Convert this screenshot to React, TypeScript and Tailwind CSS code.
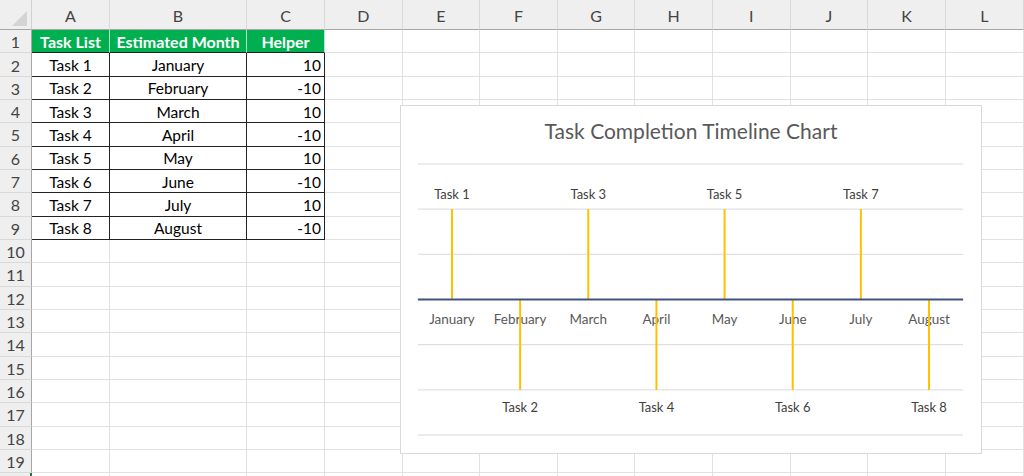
const COLS = ["A", "B", "C", "D", "E", "F", "G", "H", "I", "J", "K", "L"];

const TASKS = [
  { task: "Task 1", month: "January", helper: 10 },
  { task: "Task 2", month: "February", helper: -10 },
  { task: "Task 3", month: "March", helper: 10 },
  { task: "Task 4", month: "April", helper: -10 },
  { task: "Task 5", month: "May", helper: 10 },
  { task: "Task 6", month: "June", helper: -10 },
  { task: "Task 7", month: "July", helper: 10 },
  { task: "Task 8", month: "August", helper: -10 },
];

const HEADINGS = ["Task List", "Estimated Month", "Helper"];

function Cell({ row, col }: { row: number; col: number }) {
  if (row === 1 && col < 3) {
    return (
      <div className="flex items-center justify-center border-r border-b border-r-white/70 border-b-[#222] bg-[#00b050] pt-[1px] text-[16px] font-bold text-white">
        {HEADINGS[col]}
      </div>
    );
  }
  if (row >= 2 && row <= 9 && col < 3) {
    const item = TASKS[row - 2];
    if (col === 2) {
      return (
        <div className="flex items-center justify-end border-r border-b border-[#222] pt-[2px] pr-[3px] text-[15.5px] text-black">
          {item.helper}
        </div>
      );
    }
    return (
      <div className="flex items-center justify-center border-r border-b border-[#222] pt-[2px] text-[15.5px] text-black">
        {col === 0 ? item.task : item.month}
      </div>
    );
  }
  return <div className="border-r border-b border-[#e1e1e1]" />;
}

function TimelineChart() {
  const left = 16;
  const step = 547 / 8;
  const gridY = [14, 59.33, 104.67, 195.33, 240.67, 286];
  const axisY = 150;

  return (
    <div className="absolute top-[105px] left-[400px] flex h-[349px] w-[582px] flex-col border border-[#d9d9d9] bg-white">
      <div className="pt-[11px] text-center text-[21px] leading-[28px] text-[#595959]">Task Completion Timeline Chart</div>
      <svg className="mt-[5px]" width="580" height="304" viewBox="0 0 580 304">
        {gridY.map((y) => (
          <line key={y} x1={left} x2={left + 547} y1={y} y2={y} stroke="#d9d9d9" strokeWidth="1" />
        ))}
        {TASKS.map((t, i) => {
          const cx = left + step * (i + 0.5);
          const up = t.helper > 0;
          return (
            <g key={t.task}>
              <text x={cx} y={175} textAnchor="middle" fontSize="13.5" fill="#595959">
                {t.month}
              </text>
              <text x={cx} y={up ? 49 : 263} textAnchor="middle" fontSize="13" fill="#404040">
                {t.task}
              </text>
              <line x1={cx} x2={cx} y1={up ? 59.33 : axisY} y2={up ? axisY : 240.67} stroke="#ffc000" strokeWidth="2" />
            </g>
          );
        })}
        <line x1={left} x2={left + 547} y1={axisY} y2={axisY} stroke="#3e5481" strokeWidth="2" />
      </svg>
    </div>
  );
}

export default function App() {
  const rows = Array.from({ length: 19 }, (_, i) => i + 1);

  return (
    <div className="relative h-[476px] w-[1024px] overflow-hidden bg-white font-['Lato',sans-serif]">
      <div className="grid h-full grid-cols-[32px_78px_137px_78px_repeat(8,77.6px)_1fr] grid-rows-[30px_repeat(19,23.33px)_1fr]">
        {/* corner */}
        <div className="relative border-r border-b border-r-[#d0d0d0] border-b-[#a6a6a6] bg-[#efefef]">
          <svg className="absolute right-[4px] bottom-[3px]" width="15" height="15" viewBox="0 0 15 15">
            <polygon points="0,15 15,15 15,0" fill="#d4d4d4" />
          </svg>
        </div>
        {COLS.map((c) => (
          <div
            key={c}
            className="flex items-center justify-center border-r border-b border-r-[#d9d9d9] border-b-[#a6a6a6] bg-[#efefef] pt-[2px] text-[16px] text-[#444]"
          >
            {c}
          </div>
        ))}
        {rows.map((r) => (
          <div key={r} className="contents">
            <div className="flex items-center justify-center border-r border-b border-r-[#a6a6a6] border-b-[#d9d9d9] bg-[#efefef] pt-[2px] text-[16px] text-[#444]">
              {r}
            </div>
            {COLS.map((c, ci) => (
              <Cell key={c} row={r} col={ci} />
            ))}
          </div>
        ))}
        <div className="border-r-2 border-r-[#217346] bg-[#efefef]" />
        {COLS.map((c) => (
          <div key={c} className="border-r border-[#e1e1e1]" />
        ))}
      </div>
      <TimelineChart />
    </div>
  );
}
